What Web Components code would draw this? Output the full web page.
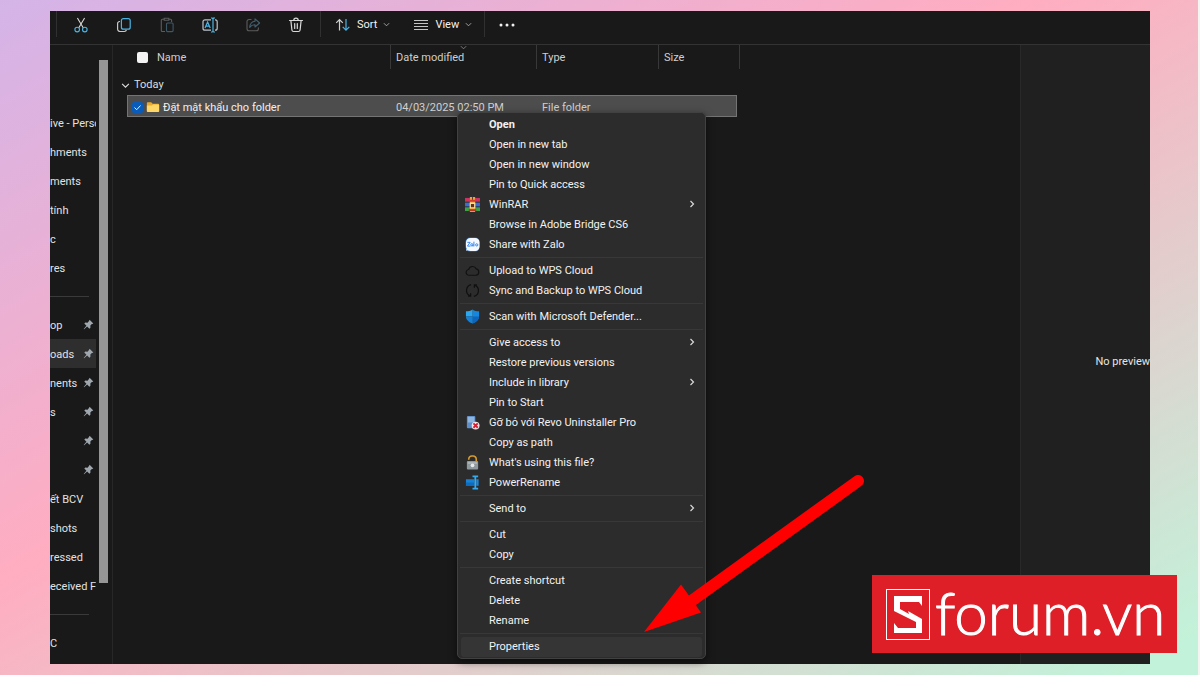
<!DOCTYPE html>
<html lang="vi">
<head>
<meta charset="utf-8">
<meta name="viewport" content="width=device-width, initial-scale=1">
<title>File Explorer</title>
<style>
html,body{margin:0}
body{font-family:Roboto,"Open Sans",sans-serif;font-size:11px;line-height:20px;color:#e6e6e6}
</style>
</head>
<body>
<app-stage>
  <explorer-window>
    <command-bar slot="bar"></command-bar>
    <nav-pane slot="nav">
      <nav-item></nav-item>
      <nav-item>ive - Perso</nav-item>
      <nav-item>hments</nav-item>
      <nav-item>ments</nav-item>
      <nav-item>tính</nav-item>
      <nav-item>c</nav-item>
      <nav-item>res</nav-item>
      <nav-line></nav-line>
      <nav-item pinned>op</nav-item>
      <nav-item pinned current>oads</nav-item>
      <nav-item pinned>nents</nav-item>
      <nav-item pinned>s</nav-item>
      <nav-item pinned></nav-item>
      <nav-item pinned></nav-item>
      <nav-item>ết BCV</nav-item>
      <nav-item>shots</nav-item>
      <nav-item>ressed</nav-item>
      <nav-item>eceived Fi</nav-item>
      <nav-line></nav-line>
      <nav-item>C</nav-item>
    </nav-pane>
    <file-list slot="files"></file-list>
    <preview-pane slot="preview">No preview</preview-pane>
  </explorer-window>
  <context-menu slot="over">
    <menu-item bold>Open</menu-item>
    <menu-item>Open in new tab</menu-item>
    <menu-item>Open in new window</menu-item>
    <menu-item>Pin to Quick access</menu-item>
    <menu-item icon="winrar" more>WinRAR</menu-item>
    <menu-item>Browse in Adobe Bridge CS6</menu-item>
    <menu-item icon="zalo">Share with Zalo</menu-item>
    <menu-line></menu-line>
    <menu-item icon="cloud">Upload to WPS Cloud</menu-item>
    <menu-item icon="sync">Sync and Backup to WPS Cloud</menu-item>
    <menu-line></menu-line>
    <menu-item icon="shield">Scan with Microsoft Defender...</menu-item>
    <menu-line></menu-line>
    <menu-item more>Give access to</menu-item>
    <menu-item>Restore previous versions</menu-item>
    <menu-item more>Include in library</menu-item>
    <menu-item>Pin to Start</menu-item>
    <menu-item icon="revo">Gỡ bỏ với Revo Uninstaller Pro</menu-item>
    <menu-item>Copy as path</menu-item>
    <menu-item icon="lock">What's using this file?</menu-item>
    <menu-item icon="powerrename">PowerRename</menu-item>
    <menu-line></menu-line>
    <menu-item more>Send to</menu-item>
    <menu-line></menu-line>
    <menu-item>Cut</menu-item>
    <menu-item>Copy</menu-item>
    <menu-line></menu-line>
    <menu-item>Create shortcut</menu-item>
    <menu-item>Delete</menu-item>
    <menu-item>Rename</menu-item>
    <menu-line></menu-line>
    <menu-item current>Properties</menu-item>
  </context-menu>
  <pointer-arrow slot="over"></pointer-arrow>
  <brand-badge slot="over">forum.vn</brand-badge>
</app-stage>

<script>
const ICONS = {
  cut: '<g fill="none" stroke-width="1.1"><path stroke="#d8d8d8" d="M4.4 1 10.2 10.8M11.6 1 5.8 10.8"/><g stroke="#4cb4e4"><circle cx="4.2" cy="12.6" r="2.3"/><circle cx="11.8" cy="12.6" r="2.3"/></g></g>',
  copy: '<g fill="none" stroke-width="1.2"><path stroke="#c8c8c8" d="M4 4.5H3.6A2 2 0 0 0 1.6 6.5v5.4a2.6 2.6 0 0 0 2.6 2.6h4.2a2 2 0 0 0 2-1.6"/><rect x="5.4" y="1.6" width="8.8" height="10.6" rx="2" stroke="#4cb4e4"/></g>',
  paste: '<g fill="none" stroke-width="1.1"><path stroke="#5c5c5c" d="M6 14.5H3.3a1 1 0 0 1-1-1V3.3a1 1 0 0 1 1-1H5M10 2.3h1.6a1 1 0 0 1 1 1V5M5.2 1.3h4.6v2H5.2z"/><rect x="7.5" y="6" width="6.6" height="8.6" rx="1" stroke="#3d5968"/></g>',
  rename: '<g fill="none" stroke-width="1.2"><path stroke="#b8c4cc" d="M9 2.8H3a2 2 0 0 0-2 2v6.4a2 2 0 0 0 2 2h6M13 2.8h.2a2 2 0 0 1 2 2v6.4a2 2 0 0 1-2 2H13"/><path stroke="#4cb4e4" d="M3 11 5.6 5 8.2 11M3.8 9.2h3.6M11 1.5v13M9.2.9c1 0 1.8.2 1.8 1 0-.8.8-1 1.8-1M9.2 15.1c1 0 1.8-.2 1.8-1 0 .8.8 1 1.8 1"/></g>',
  share: '<g fill="none" stroke-width="1.1" stroke-linejoin="round"><path stroke="#5c5c5c" d="M6.5 2.5H4a2 2 0 0 0-2 2v7.3a2 2 0 0 0 2 2h7.4a2 2 0 0 0 2-2v-1.3"/><path stroke="#43606f" d="M10 1.8 14.6 6 10 10V7.7C7.4 7.6 6 8.6 4.7 10.3 5 7 6.7 4.5 10 4.2z"/></g>',
  trash: '<g fill="none" stroke="#d8d8d8" stroke-width="1.2" stroke-linecap="round"><path d="M1.5 3.5h13M5.8 3.3a2.2 2.2 0 0 1 4.4 0M2.9 3.7l1 9.3a1.7 1.7 0 0 0 1.7 1.5h4.8a1.7 1.7 0 0 0 1.7-1.5l1-9.3M6.7 6.5v5M9.3 6.5v5"/></g>',
  sort: '<g fill="none" stroke-width="1.2"><path stroke="#d0d0d0" d="M4.500 13.500V2.600M1.200 5.800 4.500 2.500 7.800 5.800"/><path stroke="#4cb4e4" d="M11 2v11M7.700 9.800 11 13.100l3.300-3.300"/></g>',
  view: '<path stroke="#c4c4c4" stroke-width="1" d="M1 3.500h14M1 6.500h14M1 9.500h14M1 12.500h14"/>',
  dots: '<g fill="#f0f0f0"><circle cx="2" cy="8" r="1.5"/><circle cx="8" cy="8" r="1.5"/><circle cx="14" cy="8" r="1.5"/></g>',
  down: '<path fill="none" stroke="currentColor" stroke-width="2" d="M2 5 8 11 14 5"/>',
  right: '<path fill="none" stroke="currentColor" stroke-width="2.400" d="M5 2 11 8 5 14"/>',
  pin: '<path fill="#9fa8af" d="M9.600 1 15 6.400l-1.700.7-.4.2-2.200 2.300.1 3-1.500 1.500L6 10.800 1.600 14.800 1 14.400 5 9.900 1.900 6.700 3.400 5.200l3.200.1L8.700 3z"/>',
  folder: '<path fill="#e9a92d" d="M1 3.500a1 1 0 0 1 1-1h4l1.600 1.700H14a1 1 0 0 1 1 1V13H1z"/><path fill="#ffd766" d="M1 6.200h5.800L8.300 5H14a1 1 0 0 1 1 1v6.700a1 1 0 0 1-1 1H2a1 1 0 0 1-1-1z"/>',
  winrar: '<path fill="#c8316c" d="M0 1h16v4H0z"/><path fill="#3d6bd0" d="M0 6h16v4H0z"/><path fill="#3aa345" d="M0 11h16v4H0z"/><path fill="#eaa33c" d="M5.200 0h5.600v16H5.200z"/><path fill="#d43b2c" d="M0 2h3v2H0zM13 2h3v2h-3zM5 3h6v2H5z"/><path fill="#f7e0a6" d="M5 6h6v6H5z"/><path fill="#63301c" d="M6.300 7.500h3.400v3.300H6.300zM7.500 0h1v3h-1z"/><path fill="#b63620" d="M4 13h8v2H4z"/>',
  zalo: '<rect x=".5" y=".5" width="15" height="15" rx="5" fill="#1672ee"/><path fill="#f5f9ff" d="M6 1h5a4.500 4.500 0 0 1 4.500 4.500v5A4.500 4.500 0 0 1 11 15H6q-2 0-3.200-.8L1 14.600l.8-2.200Q1 11 1 9.500V6a5 5 0 0 1 5-5z"/><path fill="none" stroke="#2e80ef" stroke-width="1" d="M2.500 5.700h3L2.600 9.700h3.200M9.500 5v5M8.500 8.300a1.200 1.200 0 1 1-2.400 0 1.200 1.200 0 0 1 2.400 0V10M13.700 8.400a1.200 1.200 0 1 1-2.400 0 1.200 1.200 0 0 1 2.400 0"/>',
  cloud: '<path fill="none" stroke="#111" stroke-width="1.200" d="M4.500 13a3 3 0 0 1-.6-6A4.300 4.300 0 0 1 12 6.300 3.400 3.400 0 0 1 11.800 13z"/>',
  sync: '<path fill="none" stroke="#101010" stroke-width="1.300" d="M6.500 1.800A6.300 6.300 0 0 0 5 13.500M3.300 13.900H6V11M9.500 14.200A6.300 6.300 0 0 0 11 2.500M12.700 2.100H10V5"/>',
  shield: '<path fill="#1687dd" d="M8 .5C10 2 12.500 2.500 15 2.500V7.800c0 4-3.300 6.300-7 7.700z"/><path fill="#2ba7ef" d="M8 .5C6 2 3.500 2.500 1 2.500V8h7z"/><path fill="#0f65bb" d="M8 8h7c0 3.800-3.300 6.100-7 7.500z"/><path fill="#1780d5" d="M1 8h7v7.500C4.300 14.100 1 11.800 1 8z"/>',
  revo: '<rect x="2" y="1" width="9" height="13" rx="1" fill="#5e8fc8"/><path fill="#8db5de" d="M3 2h7v6H3z"/><circle cx="11.300" cy="11.300" r="4.200" fill="#f2e4e6"/><path stroke="#d22036" stroke-width="1.900" d="m9 9 4.600 4.600M13.600 9 9 13.600"/>',
  lock: '<path fill="none" stroke="#d79a2b" stroke-width="1.700" d="M4 5V4a3.400 3.400 0 0 1 3.400-3h1A3.400 3.400 0 0 1 12 4.500V7"/><rect x="2" y="6.500" width="12" height="9" rx="1" fill="#8f989d"/><path fill="#adb4b7" d="M3 7.500h10v2H3z"/><circle cx="8" cy="11" r="2" fill="#e6e9ea"/>',
  powerrename: '<path fill="#1682d6" d="M1 4.500h9v7H1z"/><path fill="#0e6bbd" d="M1 8h9v3.500H1z"/><path fill="none" stroke="#35aaf0" stroke-width="1.900" d="M11 1.500v13M8 1.500h6M8 14.500h6"/><path fill="#1c86d6" d="M12 4.500h2.500v7H12z"/>'
};

function define(name, html, setup) {
  const template = document.createElement('template');
  template.innerHTML = html;
  customElements.define(name, class extends HTMLElement {
    constructor() {
      super();
      this.attachShadow({ mode: 'open' }).append(template.content.cloneNode(true));
    }
    connectedCallback() { if (setup) setup(this, this.shadowRoot); }
  });
}

define('fe-icon', `<style>
:host{display:block;flex:none;width:var(--icon,16px);height:var(--icon,16px)}
svg{display:block;width:100%;height:100%}
</style><svg viewBox="0 0 16 16" aria-hidden="true"></svg>`, (host, root) => {
  root.querySelector('svg').innerHTML = ICONS[host.getAttribute('name')] || '';
});

define('app-stage', `<style>
:host{display:flex;position:relative;box-sizing:border-box;min-height:100vh;padding:11px 50px;overflow:hidden;
background:linear-gradient(to bottom right,#d4b4e8 0%,#ffadc1 43%,#c2f2d9 97%);border-right:2px solid #f4f4f2}
::slotted(explorer-window){flex:1;margin-right:-2px}
</style><slot></slot><slot name="over"></slot>`);

define('explorer-window', `<style>
:host{display:flex;flex-direction:column;min-width:0;background:#191919}
.body{display:flex;flex:1;min-height:0}
::slotted(file-list){flex:1;min-width:0}
</style><slot name="bar"></slot><div class="body"><slot name="nav"></slot><slot name="files"></slot><slot name="preview"></slot></div>`);

define('tool-button', `<style>
:host{display:block}
button{display:flex;align-items:center;justify-content:center;gap:6px;min-width:43px;height:26px;padding:1px 0 0;border:0;background:none;color:#f2f2f2;font:inherit}
.chev{--icon:7px;color:#b0b0b0}
</style><button type="button"><fe-icon class="main"></fe-icon><slot></slot></button>`, (host, root) => {
  const button = root.querySelector('button');
  const icon = document.createElement('fe-icon');
  icon.setAttribute('name', host.getAttribute('icon'));
  button.firstElementChild.replaceWith(icon);
  button.setAttribute('aria-label', host.getAttribute('label'));
  if (host.hasAttribute('menu')) button.insertAdjacentHTML('beforeend', '<fe-icon class="chev" name="down"></fe-icon>');
});

define('command-bar', `<style>
:host{display:flex;align-items:center;height:33px;border-bottom:1px solid #333}
.group{display:flex;align-items:center;height:26px;align-self:flex-start}
.rule{width:1px;height:26px;background:#303030;align-self:flex-start}
.tools{padding:0 3px 0 2px}
.lists{gap:23px;padding:0 12px 0 14px}
.lead{width:6px}
</style>
<div class="lead"></div><div class="rule"></div>
<div class="group tools">
<tool-button icon="cut" label="Cut"></tool-button><tool-button icon="copy" label="Copy"></tool-button><tool-button icon="paste" label="Paste"></tool-button><tool-button icon="rename" label="Rename"></tool-button><tool-button icon="share" label="Share"></tool-button><tool-button icon="trash" label="Delete"></tool-button>
</div><div class="rule"></div>
<div class="group lists"><tool-button icon="sort" label="Sort" menu>Sort</tool-button><tool-button icon="view" label="View" menu>View</tool-button></div>
<div class="rule"></div><div class="group"><tool-button icon="dots" label="See more"></tool-button></div>`);

define('nav-pane', `<style>
:host{display:flex;width:62px;border-right:1px solid #272727;overflow:hidden}
nav{flex:1;min-width:0;padding-top:34px}
.thumb{flex:none;width:9px;margin:15px 4px 81px 3px;background:#969696}
</style><nav aria-label="Folders"><slot></slot></nav><div class="thumb"></div>`);

define('nav-item', `<style>
:host{display:block}
:host([current]) a{background:#2e2e2e}
a{display:flex;align-items:center;justify-content:space-between;height:29px;padding-right:2px;color:#e2e2e2;text-decoration:none;overflow:hidden;white-space:nowrap;--icon:11px}
span{padding-top:2px}
:host(:not([pinned])) a{padding-right:0}
</style><a href="#"><span><slot></slot></span></a>`, (host, root) => {
  if (host.hasAttribute('pinned')) root.querySelector('a').insertAdjacentHTML('beforeend', '<fe-icon name="pin"></fe-icon>');
});

define('nav-line', `<style>
:host{display:flex;align-items:center;height:28px}
hr{flex:1;margin:0 7px 0 0;border:0;border-top:1px solid #3a3a3a}
</style><hr>`);

define('file-list', `<style>
:host{display:block}
table,thead,tbody{display:block}
table{margin-left:8px}
tr{display:grid;grid-template-columns:270px 146px 122px 81px;align-items:center}
th,td{padding:0;font-weight:400;text-align:left;white-space:nowrap}
th{color:#cfcfcf}
thead th{position:relative;height:24px;line-height:26px;padding-left:5px;border-right:1px solid #383838}
thead th:first-child{display:flex;align-items:center;gap:9px;padding-left:16px}
thead span{padding-top:2px}
.sorted fe-icon{position:absolute;left:69px;top:-1px;--icon:7px;color:#8a8a8a}
.group{height:30px}
.group th{display:flex;align-items:center;gap:4px;padding-top:2px;--icon:9px;color:#dedede}
.file{grid-template-columns:262px 146px 122px 78px;width:608px;height:20px;margin:-4px 0 0 6px;border:1px solid #747474;background:#4d4d4d;color:#d0d0d0}
.file td{padding:2px 0 0 6px}
.file td:first-child{display:flex;align-items:center;gap:3px;padding:0 0 0 4px;color:#f0f0f0;--icon:14px}
.file span{padding-top:2px}
input{appearance:none;flex:none;width:11px;height:11px;margin:0;border-radius:2px;background:#f3f3f3}
input:checked{background:#0a5cb8}
label{display:flex;position:relative}
.tick{position:absolute;left:2px;top:2px;width:7px;height:7px;pointer-events:none}
</style>
<table>
<thead><tr>
<th scope="col"><input type="checkbox" aria-label="Select all"><span>Name</span></th>
<th scope="col" class="sorted" aria-sort="descending">Date modified<fe-icon name="down"></fe-icon></th>
<th scope="col">Type</th><th scope="col">Size</th>
</tr></thead>
<tbody>
<tr class="group"><th scope="rowgroup"><fe-icon name="down"></fe-icon>Today</th></tr>
<tr class="file"><td><label><input type="checkbox" checked aria-label="Select folder"><svg class="tick" viewBox="0 0 7 7"><path d="M.5 3.500 2.700 5.700 6.500 1.500" fill="none" stroke="#e8f2ff"/></svg></label><fe-icon name="folder"></fe-icon><span>Đặt mật khẩu cho folder</span></td><td>04/03/2025 02:50 PM</td><td>File folder</td><td></td></tr>
</tbody></table>`);

define('preview-pane', `<style>
:host{display:flex;align-items:center;justify-content:flex-end;width:129px;border-left:1px solid #292929;background:#202020;white-space:nowrap;overflow:hidden}
p{margin:14px 0 0}
</style><p><slot></slot></p>`);

define('context-menu', `<style>
:host{position:absolute;left:457px;top:112px;width:247px;padding:2px 0 1px;border:1px solid #414141;border-radius:5px;background:#2c2c2c;box-shadow:0 3px 8px #0008}
</style><div role="menu"><slot></slot></div>`);

define('menu-item', `<style>
:host{display:block;padding:0 3px}
:host([bold]){font-weight:700}
:host([current]) button{background:#353535}
button{display:grid;grid-template-columns:15px 1fr 8px;align-items:center;column-gap:9px;width:100%;height:20px;padding:0 6px 0 4px;border:0;border-radius:3px;background:none;color:#f2f2f2;font:inherit;text-align:left;white-space:nowrap}
fe-icon{margin-bottom:2px}
.main{--icon:15px}
.more{--icon:8px;color:#d8d8d8}
</style><button type="button" role="menuitem"><fe-icon class="main"></fe-icon><span><slot></slot></span></button>`, (host, root) => {
  const button = root.querySelector('button');
  const icon = document.createElement('fe-icon');
  icon.className = 'main';
  icon.setAttribute('name', host.getAttribute('icon') || '');
  button.firstElementChild.replaceWith(icon);
  if (host.hasAttribute('more')) button.insertAdjacentHTML('beforeend', '<fe-icon class="more" name="right"></fe-icon>');
});

define('menu-line', `<style>
:host{display:block;height:6px;padding-top:2px;box-sizing:border-box}
hr{margin:0 2px;border:0;border-top:1px solid #383838}
</style><hr>`);

define('pointer-arrow', `<style>
:host{position:absolute;left:640px;top:470px;width:230px;height:166px;pointer-events:none}
svg{display:block}
</style><svg width="230" height="166" viewBox="0 0 230 166" aria-hidden="true"><path d="M218 11 50 132" stroke="#f00" stroke-width="12" stroke-linecap="round"/><path fill="#f00" d="M4 162 41 114.500 61 142.500z"/></svg>`);

define('brand-badge', `<style>
:host{position:absolute;right:21px;bottom:22px;display:flex;align-items:center;box-sizing:border-box;width:305px;height:78px;padding-left:14px;gap:4px;background:#de1f27;color:#fff;font:300 60px/74px Lato,sans-serif;-webkit-text-stroke:1px #fff;white-space:nowrap}
svg{flex:none}
span{padding-bottom:4px}
</style><svg width="45" height="51" viewBox="0 0 45 51" aria-hidden="true"><rect x=".5" y=".5" width="43" height="50" fill="none" stroke="#fff"/><path fill="#fff" d="M8 7h28v10l-3-4H14v7l9 5-1-3 14 8v14H8V34l4 5h18v-6L8 22z"/></svg><span><slot></slot></span>`);
</script>
</body>
</html>
